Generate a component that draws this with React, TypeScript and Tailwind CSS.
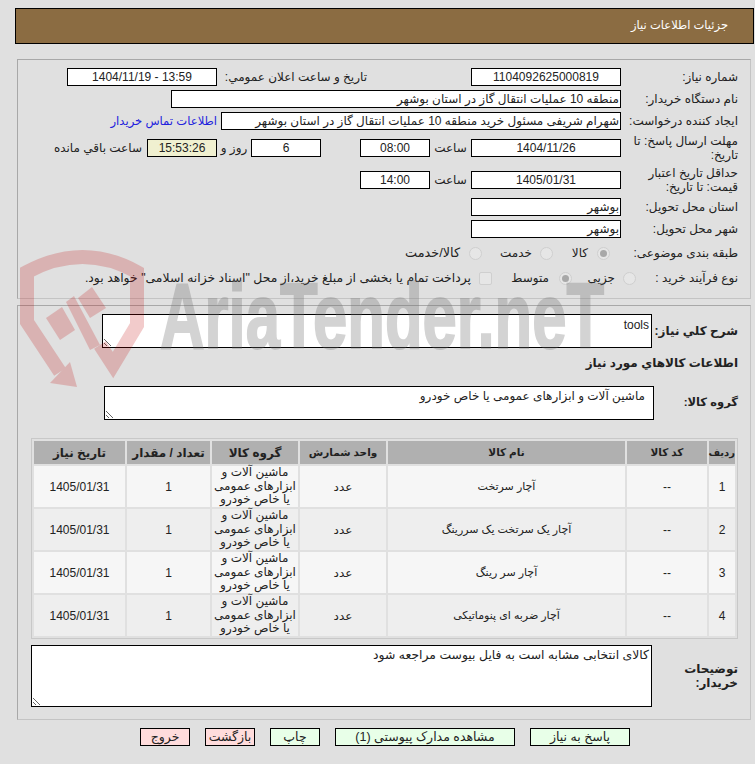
import React from 'react'

const items = [
  { id: 1, name: 'آچار سرتخت' },
  { id: 2, name: 'آچار یک سرتخت یک سررینگ' },
  { id: 3, name: 'آچار سر رینگ' },
  { id: 4, name: 'آچار ضربه ای پنوماتیکی' },
]

function Box({ className = '', children }: { className?: string; children?: React.ReactNode }) {
  return (
    <div className={`h-[18px] shrink-0 border border-black bg-white flex items-center justify-center leading-none overflow-hidden whitespace-nowrap ${className}`}>
      {children}
    </div>
  )
}

function Radio({ checked = false }: { checked?: boolean }) {
  return (
    <span className="w-[13px] h-[13px] shrink-0 rounded-full border border-[#cfcfcf] bg-[#e6e6e6] flex items-center justify-center">
      {checked && <span className="w-[7px] h-[7px] rounded-full bg-[#a8a8a8]" />}
    </span>
  )
}

function Watermark() {
  return (
    <div className="absolute left-0 top-0 w-[755px] h-[420px] pointer-events-none overflow-hidden">
      <svg className="absolute left-0 top-0 opacity-20" width="170" height="420" viewBox="0 0 170 420">
        <path d="M60 372 L27 322 L27 272 Q83 242 137 272 L137 325 L113 365 L100 345" fill="none" stroke="#c00000" strokeWidth="14" />
        <path d="M50 383 L77 387 L70 362 Z" fill="#c00000" />
        <path d="M46 318 L62 307 L75 330 L60 340 Z" fill="#c00000" />
        <path d="M78 298 L92 287 L106 308 L90 318 Z" fill="#c00000" />
        <path d="M66 302 L74 296 L100 345 L90 350 Z" fill="#c00000" />
      </svg>
      <div className="absolute left-[160px] top-[261px] origin-left scale-x-[0.67] text-[92px] leading-[110px] font-bold text-[#707070] [-webkit-text-stroke:2px_#707070] opacity-30 whitespace-nowrap [font-family:'Liberation_Sans',sans-serif]">
        AriaTender.neT
      </div>
    </div>
  )
}

export default function App() {
  return (
    <div dir="rtl" className="relative w-[755px] h-[764px] bg-[#e0e0e0] text-[12px] text-[#222] overflow-hidden [font-family:'Liberation_Sans','DejaVu_Sans',sans-serif]">
      <div className="pt-2 pl-[15px] pr-px">
        <div className="h-[36px] bg-[#8b6c42] border border-black flex items-center pr-[25px] text-[11.5px] text-white">
          جزئیات اطلاعات نیاز
        </div>
      </div>

      {/* مشخصات نیاز */}
      <div className="mt-[15px] ml-[17px] mr-1 h-[240px] border border-[#a8a8a8] border-r-[#c4c4c4] border-b-[#c4c4c4] pt-2 pr-3">
        <div className="flex items-center h-[18px]">
          <div className="w-[117px] shrink-0">شماره نیاز:</div>
          <Box className="w-[150px]">1104092625000819</Box>
          <div className="w-[104px] shrink-0" />
          <div className="w-[150px] shrink-0 whitespace-nowrap">تاریخ و ساعت اعلان عمومي:</div>
          <Box className="w-[150px]">13:59 - 1404/11/19</Box>
        </div>
        <div className="flex items-center h-[18px] mt-1">
          <div className="w-[117px] shrink-0">نام دستگاه خریدار:</div>
          <Box className="w-[450px] !justify-start pr-px">منطقه 10 عملیات انتقال گاز در استان بوشهر</Box>
        </div>
        <div className="flex items-center h-[18px] mt-1">
          <div className="w-[117px] shrink-0">ایجاد کننده درخواست:</div>
          <Box className="w-[400px] !justify-start pr-px">شهرام شریفی مسئول خرید منطقه 10 عملیات انتقال گاز در استان بوشهر</Box>
          <div className="mr-1 text-[11.6px] text-[#2222dd] whitespace-nowrap">اطلاعات تماس خریدار</div>
        </div>
        <div className="flex items-center h-[28px] mt-1">
          <div className="w-[117px] shrink-0 leading-[14px]">مهلت ارسال پاسخ: تا تاریخ:</div>
          <Box className="w-[150px]">1404/11/26</Box>
          <div className="w-[41px] shrink-0 text-center">ساعت</div>
          <Box className="w-[70px]">08:00</Box>
          <div className="w-[39px] shrink-0" />
          <Box className="w-[70px]">6</Box>
          <div className="w-[34px] shrink-0 text-center">روز و</div>
          <Box className="w-[70px] !bg-[#f0f0d0]">15:53:26</Box>
          <div className="mr-[5px] whitespace-nowrap">ساعت باقي مانده</div>
        </div>
        <div className="flex items-center h-[28px] mt-1">
          <div className="w-[117px] shrink-0 leading-[14px]">حداقل تاریخ اعتبار قیمت: تا تاریخ:</div>
          <Box className="w-[150px]">1405/01/31</Box>
          <div className="w-[41px] shrink-0 text-center">ساعت</div>
          <Box className="w-[70px]">14:00</Box>
        </div>
        <div className="flex items-center h-[18px] mt-1">
          <div className="w-[117px] shrink-0">استان محل تحویل:</div>
          <Box className="w-[150px] !justify-start pr-px">بوشهر</Box>
        </div>
        <div className="flex items-center h-[18px] mt-1">
          <div className="w-[117px] shrink-0">شهر محل تحویل:</div>
          <Box className="w-[150px] !justify-start pr-px">بوشهر</Box>
        </div>
        <div className="flex items-center h-[22px] mt-1">
          <div className="w-[128px] shrink-0">طبقه بندی موضوعی:</div>
          <Radio checked />
          <span className="mr-[9px] w-[35px] shrink-0">کالا</span>
          <Radio />
          <span className="mr-[8px] w-[50px] shrink-0">خدمت</span>
          <Radio />
          <span className="mr-[9px] text-[12.8px] whitespace-nowrap">کالا/خدمت</span>
        </div>
        <div className="flex items-center h-[20px] mt-1">
          <div className="w-[102px] shrink-0">نوع فرآیند خرید :</div>
          <Radio />
          <span className="mr-[8px] w-[43px] shrink-0">جزیی</span>
          <Radio checked />
          <span className="mr-[10px] w-[36px] shrink-0 whitespace-nowrap">متوسط</span>
          <span className="w-[13px] h-[13px] mr-[21px] shrink-0 rounded-[2px] border border-[#cfcfcf] bg-[#e6e6e6]" />
          <span className="mr-[8px] text-[12.4px] whitespace-nowrap">پرداخت تمام یا بخشی از مبلغ خرید،از محل "اسناد خزانه اسلامی" خواهد بود.</span>
        </div>
      </div>

      {/* شرح و اقلام */}
      <div className="mt-[6px] ml-[17px] mr-1 h-[415px] border border-[#a8a8a8] border-r-[#c4c4c4] border-b-[#c4c4c4] pt-2 pr-3">
        <div className="flex items-center h-[34px]">
          <div className="w-[86px] shrink-0 font-bold">شرح کلي نياز:</div>
          <textarea readOnly dir="rtl" defaultValue="tools" className="w-[550px] h-[34px] shrink-0 border border-black bg-white px-[2px] pt-[2px] leading-[16px] outline-none" />
        </div>
        <div className="mt-[7px] h-[16px] font-bold leading-[16px]">اطلاعات کالاهاي مورد نياز</div>
        <div className="flex items-center h-[34px] mt-[15px]">
          <div className="w-[84px] shrink-0 font-bold text-[11.5px]">گروه کالا:</div>
          <textarea readOnly dir="rtl" defaultValue="ماشین آلات و ابزارهای عمومی یا خاص خودرو" className="w-[550px] h-[34px] shrink-0 border border-black bg-white pr-[8px] pt-px leading-[16px] outline-none" />
        </div>
        <table className="mt-[18px] w-[707px] table-fixed border-separate border-spacing-[2px] border border-[#c8c8c8] text-center">
          <thead>
            <tr className="bg-[#b0b0b0] h-[23px] font-bold">
              <th className="w-[26px] p-0 text-[10px]">ردیف</th>
              <th className="w-[80px] p-0 text-[10.5px]">کد کالا</th>
              <th className="w-[237px] p-0 text-[10.5px]">نام کالا</th>
              <th className="w-[86px] p-0 text-[10.5px]">واحد شمارش</th>
              <th className="w-[86px] p-0">گروه کالا</th>
              <th className="w-[83px] p-0">تعداد / مقدار</th>
              <th className="p-0">تاریخ نیاز</th>
            </tr>
          </thead>
          <tbody>
            {items.map((item, index) => (
              <tr key={item.id} className={`h-[41px] ${index % 2 === 0 ? 'bg-[#f6f6f6]' : 'bg-[#eeeeee]'}`}>
                <td className="p-0">{item.id}</td>
                <td className="p-0">--</td>
                <td className="p-0 text-[11px]">{item.name}</td>
                <td className="p-0">عدد</td>
                <td className="p-0 leading-[13.5px]">ماشین آلات و ابزارهای عمومی یا خاص خودرو</td>
                <td className="p-0">1</td>
                <td className="p-0">1405/01/31</td>
              </tr>
            ))}
          </tbody>
        </table>
        <div className="flex items-center mt-[6px] h-[62px]">
          <div className="w-[86px] shrink-0 font-bold leading-[14px]">توضیحات خریدار:</div>
          <textarea readOnly dir="rtl" defaultValue="کالای انتخابی مشابه است به فایل بیوست مراجعه شود" className="w-[621px] h-[62px] shrink-0 border border-black bg-white px-[2px] pt-px text-[12.4px] leading-[16px] outline-none" />
        </div>
      </div>

      <div className="flex justify-start gap-[15px] mt-2 pr-[125px] text-[12.5px]">
        <button className="w-[100px] h-[18px] border border-black bg-[#e8ffe8] leading-none">پاسخ به نیاز</button>
        <button className="w-[180px] h-[18px] border border-black bg-[#e8ffe8] leading-none">مشاهده مدارک پیوستی (1)</button>
        <button className="w-[50px] h-[18px] border border-black bg-[#e8ffe8] leading-none">چاپ</button>
        <button className="w-[50px] h-[18px] border border-black bg-[#ffdcdc] leading-none">بازگشت</button>
        <button className="w-[50px] h-[18px] border border-black bg-[#ffdcdc] leading-none">خروج</button>
      </div>

      <Watermark />
    </div>
  )
}
